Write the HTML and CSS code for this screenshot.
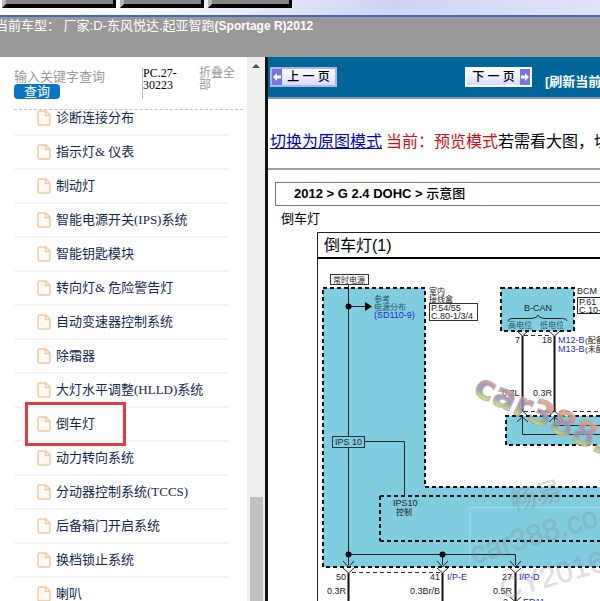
FILE: index.html
```
<!DOCTYPE html>
<html lang="zh-CN">
<head>
<meta charset="utf-8">
<title>倒车灯 - 起亚智跑</title>
<link rel="stylesheet" href="styles.css">
</head>
<body>
<svg class="defs" aria-hidden="true">
  <symbol id="doc" viewBox="0 0 14 16">
    <path d="M2.500 1H9L13 5V13.500Q13 15 11.500 15H2.500Q1 15 1 13.500V2.500Q1 1 2.500 1ZM8.500 1.500V5.500H12.500" fill="#fffaf4" stroke="#f1c79d" stroke-width="1.500"/>
  </symbol>
</svg>
<header>
  <div class="toolbar">
    <button class="tab wide" aria-label="菜单一"></button>
    <button class="tab" aria-label="菜单二"></button>
    <button class="tab" aria-label="菜单三"></button>
  </div>
  <div class="model">当前车型： 厂家:D-东风悦达.起亚智跑<b>(Sportage R)2012</b></div>
</header>
<main>
  <aside>
    <div class="side">
      <form class="search">
        <div class="query">
          <input type="text" placeholder="输入关键字查询" aria-label="关键字">
          <button type="button">查询</button>
        </div>
        <div class="code">PC.27-30223</div>
        <a class="fold" href="#">折叠全部</a>
      </form>
      <nav class="tree">
        <ul>
          <li><svg class="doc"><use href="#doc"/></svg><a href="#">诊断连接分布</a></li>
          <li><svg class="doc"><use href="#doc"/></svg><a href="#">指示灯&amp; 仪表</a></li>
          <li><svg class="doc"><use href="#doc"/></svg><a href="#">制动灯</a></li>
          <li><svg class="doc"><use href="#doc"/></svg><a href="#">智能电源开关(IPS)系统</a></li>
          <li><svg class="doc"><use href="#doc"/></svg><a href="#">智能钥匙模块</a></li>
          <li><svg class="doc"><use href="#doc"/></svg><a href="#">转向灯&amp; 危险警告灯</a></li>
          <li><svg class="doc"><use href="#doc"/></svg><a href="#">自动变速器控制系统</a></li>
          <li><svg class="doc"><use href="#doc"/></svg><a href="#">除霜器</a></li>
          <li><svg class="doc"><use href="#doc"/></svg><a href="#">大灯水平调整(HLLD)系统</a></li>
          <li class="marked"><svg class="doc"><use href="#doc"/></svg><a href="#">倒车灯</a></li>
          <li><svg class="doc"><use href="#doc"/></svg><a href="#">动力转向系统</a></li>
          <li><svg class="doc"><use href="#doc"/></svg><a href="#">分动器控制系统(TCCS)</a></li>
          <li><svg class="doc"><use href="#doc"/></svg><a href="#">后备箱门开启系统</a></li>
          <li><svg class="doc"><use href="#doc"/></svg><a href="#">换档锁止系统</a></li>
          <li><svg class="doc"><use href="#doc"/></svg><a href="#">喇叭</a></li>
        </ul>
      </nav>
    </div>
    <div class="scroll"><span class="up"></span><span class="thumb"></span></div>
  </aside>
  <section class="view">
    <div class="pager">
      <button class="page prev"><svg class="arrow" viewBox="0 0 10 16"><path d="M1 8L5 4V6.500H9V9.500H5V12Z" fill="#fff"/></svg><span>上 一 页</span></button>
      <button class="page next"><span>下 一 页</span><svg class="arrow" viewBox="0 0 10 16"><path d="M9 8L5 4V6.500H1V9.500H5V12Z" fill="#fff"/></svg></button>
      <a class="refresh" href="#">[刷新当前</a>
    </div>
    <p class="mode"><a href="#">切换为原图模式</a> <span class="red">当前：预览模式</span>若需看大图，切</p>
    <h1 class="crumb">2012 &gt; G 2.4 DOHC &gt; <span>示意图</span></h1>
    <h2 class="title">倒车灯</h2>
    <svg class="diagram">
      <defs>
        <linearGradient id="rainbow" x1="0" y1="0" x2="0" y2="1">
          <stop offset="0.250" stop-color="#e59a78"/><stop offset="0.500" stop-color="#9c84bc"/><stop offset="0.650" stop-color="#8b9e9a"/><stop offset="0.800" stop-color="#dce25c"/>
        </linearGradient>
      </defs>
      <g transform="translate(-268 -230)">
        <path d="M2000 232.500H317.500V2000" class="thin"/>
        <path d="M317 258H2000" class="thick"/>
        <text x="324" y="251" class="head">倒车灯(1)</text>
        <path d="M323 288H425V487H2000V567H323Z" class="block"/>
        <path d="M501 288H574V331H501Z" class="block"/>
        <path d="M2000 416H506V445H2000" class="block"/>
        <path d="M380 496H2000M380 541H2000M380 496V541" class="dots"/>
        <path d="M470 564V507.500H2000" fill="none" stroke="#a4dce9"/>
        <rect x="330.500" y="274.500" width="38" height="10" class="label"/>
        <text x="333" y="283" class="s">常时电源</text>
        <path d="M348.500 285V436M348.500 447V565M349 306.500H366M364 441.500H404.500V496M349 554.500H515.500V565M442.500 554V565" class="thin"/>
        <path d="M365 302L372 306.500L365 311Z"/>
        <circle cx="348.500" cy="306.500" r="3"/><circle cx="348.500" cy="554.500" r="3"/><circle cx="442.500" cy="554.500" r="3"/>
        <text x="374" y="302" class="s teal">参考</text>
        <text x="374" y="310" class="s teal">电源分布</text>
        <text x="374" y="318" class="t blue">(SD110-9)</text>
        <text x="429" y="294" class="s">室内</text>
        <text x="429" y="302" class="s">接线盒</text>
        <rect x="429.500" y="303.500" width="48" height="17" class="label"/>
        <text x="431" y="311" class="t">P.54/55</text><text x="431" y="319" class="t">C.80-1/3/4</text>
        <text x="524" y="311" class="t">B-CAN</text>
        <path d="M508 321Q509 318 515 318.500H531Q537 318 538 315Q539 318 545 318.500H560Q566 318 567 321" class="thin"/>
        <text x="508" y="328" class="s teal">高电位</text><text x="540" y="328" class="s teal">低电位</text>
        <text x="577" y="294" class="t">BCM</text>
        <path d="M2000 297.500H577.500V313.500H2000" class="thin"/>
        <text x="579" y="305" class="t">P.61</text><text x="579" y="313" class="t">C.10-</text>
        <path d="M517 331L522.500 336L528 331M549 331L554.500 336L560 331" class="thin"/>
        <path d="M524 335.500H552M524 411.500H2000M352 572.500H440" class="dash"/>
        <path d="M522.500 336V411M554.500 336V411M348.500 573V700M442.500 573V700M515.500 573V700" class="wire"/>
        <text x="515" y="343" class="t">7</text><text x="542" y="343" class="t">18</text>
        <text x="558" y="343" class="t blue">M12-B</text><text x="585" y="343" class="s">(配备</text>
        <text x="558" y="352" class="t blue">M13-B</text><text x="585" y="352" class="s">(未配</text>
        <text x="502" y="396" class="t">0.3L</text><text x="533" y="396" class="t">0.3R</text>
        <path d="M517 416L522.500 411L528 416M549 416L554.500 411L560 416M517 422L522.500 417L528 422M522.500 417V434.500H2000M549 422L554.500 417L560 422M554.500 417V425.500H2000" class="thin"/>
        <rect x="332.500" y="436.500" width="32" height="11" class="ips"/>
        <text x="335" y="445" class="t">IPS 10</text>
        <text x="393" y="506" class="t">IPS10</text><text x="396" y="515" class="s">控制</text>
        <path d="M343 561L348.500 567L354 561M437 561L442.500 567L448 561M510 561L515.500 567L521 561M343 568L348.500 573L354 568M437 568L442.500 573L448 568M510 568L515.500 573L521 568" class="thin"/>
        <text x="336" y="580" class="t">50</text><text x="430" y="580" class="t">41</text><text x="447" y="580" class="t blue">I/P-E</text>
        <text x="502" y="580" class="t">27</text><text x="519" y="580" class="t blue">I/P-D</text>
        <text x="327" y="594" class="t">0.3R</text><text x="410" y="594" class="t">0.3Br/B</text><text x="493" y="594" class="t">0.5R</text>
        <text x="503" y="605" class="t">2</text><text x="523" y="605" class="t blue">ED11</text>
        <path d="M510 597L515.500 602L521 597" class="thin"/>
        <text transform="translate(472 394) rotate(25)" class="logo">car388.</text>
        <g class="mark">
          <text transform="translate(513 511) rotate(-14)" class="m1">畅易</text>
          <text transform="translate(474 564) rotate(-17)" class="m2">car388.co</text>
          <text transform="translate(503 600) rotate(-16)" class="m2">CY2016</text>
        </g>
      </g>
    </svg>
  </section>
</main>
</body>
</html>
```
FILE: styles.css
```
* { box-sizing: border-box; }
body {
  margin: 0;
  height: 100vh;
  display: flex;
  flex-direction: column;
  overflow: hidden;
  background: #fff;
  font-family: "Liberation Serif", "Noto Sans CJK SC", serif;
}
button, input { font-family: inherit; padding: 0; margin: 0; }
a { color: inherit; text-decoration: none; }
.defs { display: none; }

.toolbar {
  display: flex;
  align-items: flex-start;
  gap: 4px;
  height: 17px;
  padding-left: 2px;
  border-bottom: 2px solid #4666bc;
  background: linear-gradient(100deg, #fff 0%, #f4f6fe 30%, #ccd6f2 65%, #dfe5fa 100%);
}
.tab {
  width: 84px;
  height: 8px;
  border: solid #000;
  border-width: 0 3px 4px 4px;
  border-left-color: #b8b8b8;
  background: #858585;
}
.tab.wide { width: 114px; }
.model {
  height: 40px;
  padding-top: 1px;
  background: #999;
  color: #fff;
  font: 13px/16px "Liberation Sans", "Noto Sans CJK SC", sans-serif;
  white-space: nowrap;
  text-indent: -5px;
}
.model b { font-size: 12px; }

main { flex: 1; display: flex; min-height: 0; }
aside {
  flex: 0 0 268px;
  display: flex;
  border-right: 3px solid #111;
}
.side { flex: 1; display: flex; flex-direction: column; min-width: 0; }
.search {
  display: flex;
  height: 53px;
  margin: 0 4px 0 14px;
  padding-top: 10px;
  border-bottom: 1px dashed #c4c4c4;
}
.query { width: 128px; padding-top: 2px; }
.query input {
  display: block;
  width: 110px;
  height: 15px;
  border: 0;
  background: none;
  font-size: 13px;
}
.query input::placeholder { color: #999; }
.query button {
  display: block;
  width: 46px;
  height: 15px;
  border: 0;
  border-radius: 4px;
  background: #0a74c6;
  color: #fff;
  font-size: 13px;
  line-height: 15px;
}
.code {
  width: 57px;
  height: 32px;
  padding-right: 10px;
  border-left: 1px solid #bbb;
  font-size: 12px;
  line-height: 12px;
}
.fold { width: 38px; color: #999; font-size: 12px; line-height: 12px; }
.tree { flex: 1; overflow: hidden; margin-right: 18px; }
.tree ul { list-style: none; margin: -8px 0 0 14px; padding: 0; }
.tree li {
  display: flex;
  align-items: center;
  gap: 5px;
  height: 34px;
  padding-left: 23px;
  border-bottom: 2px solid #f4f4f4;
  color: #14284b;
  font-size: 13px;
  line-height: 20px;
  white-space: nowrap;
}
.doc { width: 14px; height: 16px; }
.marked { position: relative; }
.marked::after {
  content: "";
  position: absolute;
  inset: -6px 103px -6px 11px;
  border: 3px solid #e43c40;
}
.scroll {
  width: 18px;
  display: flex;
  flex-direction: column;
  align-items: center;
  justify-content: space-between;
  padding-top: 7px;
  background: #efefef;
}
.up { border: 4px solid transparent; border-top: 0; border-bottom-color: #505050; }
.thumb { width: 13px; height: 104px; background: #c1c1c1; }

.view { flex: 1; min-width: 0; overflow: hidden; display: flex; flex-direction: column; white-space: nowrap; }
.pager {
  flex: none;
  display: flex;
  align-items: center;
  height: 42px;
  padding-left: 2px;
  border-bottom: 2px solid #8798aa;
  background: #069;
}
.page {
  flex: none;
  display: flex;
  align-items: stretch;
  width: 67px;
  height: 20px;
  border: 2px solid #b0b4ec;
  background: linear-gradient(#fff, #d8dafa);
  font: 500 12px/16px "Liberation Sans", "Noto Sans CJK SC", sans-serif;
}
.page span { flex: 1; }
.next { margin-left: 128px; border-color: #fff; }
.arrow { width: 10px; height: 16px; background: #7377df; }
.refresh {
  margin: 10px 0 0 13px;
  color: #fff;
  font: bold 13px/16px "Liberation Sans", "Noto Sans CJK SC", sans-serif;
}
.mode {
  margin: 0;
  padding: 32px 0 15px 2px;
  border-bottom: 2px solid #a0a0a0;
  font-size: 16px;
  line-height: 22px;
}
.mode a { color: #0000c8; text-decoration: underline; }
.red { color: #dc0a14; }
.crumb, .title {
  margin: 12px 0 0 7px;
  font: bold 13px/22px "Liberation Sans", "Noto Sans CJK SC", sans-serif;
}
.crumb { padding-left: 18px; border: 1px solid #777; border-right: 0; }
.crumb span { font-weight: 500; }
.title { margin: 2px 0 0 13px; font-weight: 400; }

.diagram { flex: 1; width: 100%; min-height: 0; font-family: "Liberation Sans", "Noto Sans CJK SC", sans-serif; }
.thin { fill: none; stroke: #222; }
.thick { fill: none; stroke: #000; stroke-width: 2; }
.wire { fill: none; stroke: #111; stroke-width: 2; }
.block { fill: #80cde0; stroke: #111; stroke-width: 2; stroke-dasharray: 4 3; }
.dots { fill: none; stroke: #111; stroke-width: 2; stroke-dasharray: 4 3; }
.dash { fill: none; stroke: #333; stroke-dasharray: 4 3; }
.label { fill: #fff; stroke: #333; }
.ips { fill: #80cde0; stroke: #234; }
.head { font-size: 16px; }
.t { font-size: 9px; fill: #222; }
.s { font-size: 8px; fill: #222; }
.teal { fill: #245666; }
.blue { fill: #2428d0; }
.logo { font: bold 34px "DejaVu Sans", sans-serif; fill: url(#rainbow); stroke: #b4a8a8; stroke-width: 1; opacity: 0.85; }
.mark { fill: #888; fill-opacity: 0.25; stroke: #888; stroke-opacity: 0.15; }
.m1 { font-size: 26px; }
.m2 { font-size: 30px; }
```
